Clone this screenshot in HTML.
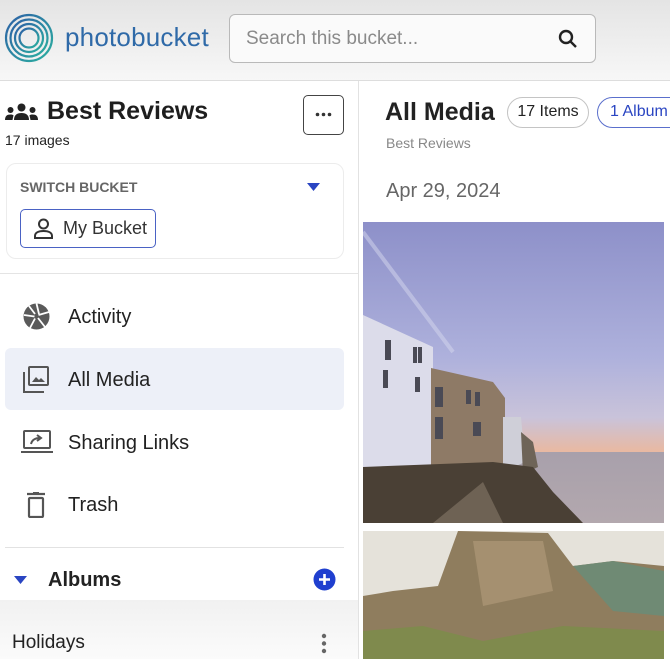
<!DOCTYPE html>
<html><head><meta charset="utf-8"><style>
*{margin:0;padding:0;box-sizing:border-box}
body{width:670px;height:659px;overflow:hidden;background:#fff;font-family:"Liberation Sans",sans-serif;color:#222;position:relative}
.a{position:absolute;white-space:nowrap}
</style></head><body>
<div class="a" style="left:0;top:0;width:670px;height:81px;background:linear-gradient(#e4e4e4,#f7f7f7);border-bottom:1px solid #ddd"></div>
<svg class="a" style="left:4px;top:13px" width="50" height="50" viewBox="0 0 50 50" fill="none" stroke-width="2.2">
<defs><linearGradient id="g" x1="0" y1="0" x2="1" y2="1"><stop offset="0" stop-color="#2d5fa6"/><stop offset="1" stop-color="#2bb0a0"/></linearGradient></defs>
<circle cx="25" cy="25" r="23" stroke="url(#g)"/><circle cx="25" cy="25" r="18.5" stroke="url(#g)"/><circle cx="25" cy="25" r="14" stroke="url(#g)"/><circle cx="25" cy="25" r="9.5" stroke="url(#g)"/></svg>
<div class="a" style="left:65px;top:22px;font-size:26px;color:#2f6aa8;letter-spacing:0.2px">photobucket</div>
<div class="a" style="left:229px;top:14px;width:367px;height:49px;border:1px solid #b9b9b9;border-radius:6px;background:#fafafa"></div>
<div class="a" style="left:246px;top:28px;font-size:19px;color:#8a8a8a">Search this bucket...</div>
<svg class="a" style="left:557px;top:28px" width="22" height="22" viewBox="0 0 22 22" fill="none" stroke="#222" stroke-width="2.4"><circle cx="9" cy="9" r="6"/><path d="M13.5 13.5L19 19"/></svg>
<div class="a" style="left:358px;top:81px;width:1px;height:578px;background:#e2e2e2"></div>
<svg class="a" style="left:5px;top:103px" width="33" height="18" viewBox="0 0 33 18" fill="#222"><circle cx="16.5" cy="4.5" r="4"/><path d="M9 17c0-5 3-7 7.5-7s7.5 2 7.5 7z"/><circle cx="5.5" cy="7" r="3"/><path d="M0 17c0-4 2-5.5 5.5-5.5 1.5 0 2.5.3 3 .8L7.5 17z"/><circle cx="27.5" cy="7" r="3"/><path d="M33 17c0-4-2-5.5-5.5-5.5-1.5 0-2.5.3-3 .8l1 4.7z"/></svg>
<div class="a" style="left:47px;top:97px;font-size:25px;font-weight:bold;color:#1e1e1e">Best Reviews</div>
<div class="a" style="left:5px;top:132px;font-size:14px;color:#222">17 images</div>
<div class="a" style="left:303px;top:95px;width:41px;height:40px;border:1.5px solid #444;border-radius:5px"></div>
<svg class="a" style="left:315px;top:112px" width="17" height="5"><circle cx="2.5" cy="2.5" r="1.8" fill="#333"/><circle cx="8.5" cy="2.5" r="1.8" fill="#333"/><circle cx="14.5" cy="2.5" r="1.8" fill="#333"/></svg>
<div class="a" style="left:6px;top:163px;width:338px;height:96px;border:1px solid #ececec;border-radius:10px"></div>
<div class="a" style="left:20px;top:179px;font-size:14px;font-weight:bold;color:#666">SWITCH BUCKET</div>
<svg class="a" style="left:307px;top:183px" width="13" height="8"><path d="M0 0h13L6.5 8z" fill="#2a45c2"/></svg>
<div class="a" style="left:20px;top:209px;width:136px;height:39px;border:1.5px solid #4a62c4;border-radius:5px"></div>
<svg class="a" style="left:33px;top:218px" width="21" height="22" viewBox="0 0 21 22" fill="none" stroke="#333" stroke-width="2"><circle cx="10.5" cy="6" r="4.5"/><path d="M2 20v-2c0-3 3-5 8.5-5s8.5 2 8.5 5v2z"/></svg>
<div class="a" style="left:63px;top:218px;font-size:18px;color:#333">My Bucket</div>
<div class="a" style="left:0;top:273px;width:358px;height:1px;background:#e4e4e4"></div>
<svg class="a" style="left:23px;top:303px" width="27" height="27" viewBox="0 0 27 27"><circle cx="13.5" cy="13.5" r="13" fill="#5a5a5a"/><g stroke="#fff" stroke-width="1.8"><path d="M13.5 0.5L16 11"/><path d="M26 9L15.5 12"/><path d="M22 24L15 15"/><path d="M7 25L12 15.5"/><path d="M1 12L11.5 13.5"/><path d="M6 3L12 11"/></g></svg>
<div class="a" style="left:68px;top:306px;font-size:20px;color:#222">Activity</div>
<div class="a" style="left:5px;top:348px;width:339px;height:62px;background:#edf0f8;border-radius:6px"></div>
<svg class="a" style="left:23px;top:366px" width="27" height="27" viewBox="0 0 27 27" fill="none" stroke="#555" stroke-width="2"><rect x="6" y="1" width="19" height="18" rx="1"/><path d="M1 6v20h20"/><path d="M9 16l4-5 3 3 2-2 4 4z" fill="#555" stroke="none"/></svg>
<div class="a" style="left:68px;top:369px;font-size:20px;color:#222">All Media</div>
<svg class="a" style="left:21px;top:430px" width="32" height="24" viewBox="0 0 32 24" fill="none" stroke="#555" stroke-width="2"><rect x="3" y="1" width="26" height="17" rx="1"/><path d="M0 22h32"/><path d="M10 14c1-4 4-6 9-6M16 5l4 3-4 3" stroke-width="2"/></svg>
<div class="a" style="left:68px;top:432px;font-size:20px;color:#222">Sharing Links</div>
<svg class="a" style="left:26px;top:492px" width="20" height="26" viewBox="0 0 20 26" fill="none" stroke="#555" stroke-width="2.2"><path d="M1 2h18M7 0.5h6"/><rect x="3" y="6" width="14" height="19" rx="1"/></svg>
<div class="a" style="left:68px;top:494px;font-size:20px;color:#222">Trash</div>
<div class="a" style="left:5px;top:547px;width:339px;height:1px;background:#e2e2e2"></div>
<div class="a" style="left:0;top:600px;width:358px;height:59px;background:linear-gradient(#f1f1f1,#fbfbfb)"></div>
<svg class="a" style="left:14px;top:576px" width="13" height="8"><path d="M0 0h13L6.5 8z" fill="#2a45c2"/></svg>
<div class="a" style="left:48px;top:569px;font-size:20px;font-weight:bold;color:#222">Albums</div>
<svg class="a" style="left:313px;top:568px" width="23" height="23" viewBox="0 0 23 23"><circle cx="11.5" cy="11.5" r="11" fill="#1f3fcf"/><path d="M11.5 6v11M6 11.5h11" stroke="#fff" stroke-width="2.6"/></svg>
<div class="a" style="left:12px;top:632px;font-size:19px;color:#222">Holidays</div>
<svg class="a" style="left:320px;top:633px" width="8" height="22"><circle cx="4" cy="3" r="2.2" fill="#666"/><circle cx="4" cy="10.5" r="2.2" fill="#666"/><circle cx="4" cy="18" r="2.2" fill="#666"/></svg>
<div class="a" style="left:385px;top:98px;font-size:25px;font-weight:bold;color:#222">All Media</div>
<div class="a" style="left:507px;top:97px;width:82px;height:31px;border:1.5px solid #c4c4c4;border-radius:16px;font-size:16px;line-height:28px;text-align:center;color:#222">17 Items</div>
<div class="a" style="left:597px;top:97px;width:90px;height:31px;border:1.5px solid #5a6fcc;border-radius:16px;font-size:16px;line-height:28px;padding-left:12px;color:#2a45c2">1 Album</div>
<div class="a" style="left:386px;top:135px;font-size:14px;color:#888">Best Reviews</div>
<div class="a" style="left:386px;top:180px;font-size:20px;color:#666">Apr 29, 2024</div>
<svg class="a" style="left:363px;top:222px" width="301" height="301" viewBox="0 0 301 301">
<defs><linearGradient id="sky" x1="0" y1="0" x2="0" y2="1"><stop offset="0" stop-color="#8d90c9"/><stop offset=".45" stop-color="#aeb1dc"/><stop offset=".65" stop-color="#c9c3da"/><stop offset=".76" stop-color="#e8b9a3"/></linearGradient>
<linearGradient id="sea" x1="0" y1="0" x2="0" y2="1"><stop offset="0" stop-color="#a8a0ab"/><stop offset="1" stop-color="#b3a8ae"/></linearGradient></defs>
<rect width="301" height="301" fill="url(#sky)"/>
<rect y="230" width="301" height="71" fill="url(#sea)"/>
<path d="M0 10L90 130" stroke="#d6d8ee" stroke-width="4" opacity=".5"/>
<path d="M0 93L70 125V250H0z" fill="#dcdcea"/>
<path d="M68 146L130 160L142 176V250H68z" fill="#8e7a66"/>
<path d="M140 195L158 195L162 240L140 250z" fill="#cfcfd8"/>
<path d="M158 210L170 220L175 245L160 252z" fill="#6e6458"/>
<path d="M0 245L130 240L170 245L190 270L220 301H0z" fill="#4a4035"/>
<path d="M70 301L120 260L140 301z" fill="#6e6254"/>
<g fill="#4a4a55"><rect x="22" y="118" width="6" height="20"/><rect x="20" y="148" width="5" height="18"/><rect x="50" y="125" width="4" height="16"/><rect x="55" y="125" width="4" height="16"/><rect x="52" y="155" width="5" height="15"/><rect x="72" y="165" width="8" height="20"/><rect x="103" y="168" width="5" height="14"/><rect x="112" y="170" width="5" height="14"/><rect x="72" y="195" width="8" height="22"/><rect x="110" y="200" width="8" height="14"/></g>
</svg>
<svg class="a" style="left:363px;top:531px" width="301" height="128" viewBox="0 0 301 128">
<rect width="301" height="128" fill="#e5e2da"/>
<path d="M0 65L30 60L75 55L95 0L185 2L210 35L250 30L301 35V128H0z" fill="#8f7d5e"/>
<path d="M210 35L250 30L301 40V85L250 80z" fill="#6f8a74"/>
<path d="M110 10L180 10L190 60L120 75z" fill="#a59070"/>
<path d="M0 100L60 95L120 110L200 95L301 100V128H0z" fill="#7f8a4d"/>
</svg>
</body></html>
